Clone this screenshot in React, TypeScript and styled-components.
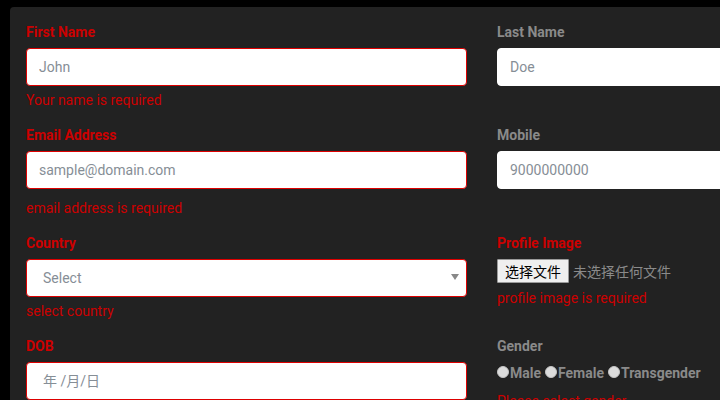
import React from "react";
import styled, { createGlobalStyle } from "styled-components";

const Global = createGlobalStyle`
  html, body {
    margin: 0;
    padding: 0;
    background: #000;
    overflow: hidden;
    width: 720px;
    height: 400px;
  }
  body {
    font-family: Roboto, "Noto Sans CJK SC", sans-serif;
  }
`;

const Page = styled.div`
  padding: 7px 0 0 10px;
`;

const Panel = styled.form`
  width: 944px;
  min-height: 420px;
  box-sizing: border-box;
  background: #222222;
  border-radius: 4px;
  padding: 15px 16px;
`;

const Row = styled.div`
  display: grid;
  grid-template-columns: 441px 441px;
  column-gap: 30px;
  margin-bottom: 15px;
`;

const Field = styled.div`
  display: flex;
  flex-direction: column;
  position: relative;
`;

const Label = styled.label<{ $invalid?: boolean }>`
  display: block;
  font-family: Roboto, sans-serif;
  font-weight: 700;
  font-size: 14px;
  line-height: 20px;
  margin-bottom: 6px;
  color: ${(p) => (p.$invalid ? "#cc0000" : "#8a8a8a")};
`;

const TextInput = styled.input<{ $invalid?: boolean; $pad?: number }>`
  box-sizing: border-box;
  width: 100%;
  height: 38px;
  margin: 0;
  border: 1px solid ${(p) => (p.$invalid ? "#dd0000" : "#ffffff")};
  border-radius: 4px;
  background: #ffffff;
  padding: 0 12px 0 ${(p) => p.$pad ?? 12}px;
  font-family: Roboto, "Noto Sans CJK SC", sans-serif;
  font-size: 14px;
  color: #495057;
  outline: none;
  &::placeholder {
    color: #868e96;
    opacity: 1;
  }
`;

const SelectWrap = styled.div`
  position: relative;
`;

const Select = styled.select<{ $invalid?: boolean }>`
  appearance: none;
  -webkit-appearance: none;
  box-sizing: border-box;
  width: 100%;
  height: 38px;
  margin: 0;
  border: 1px solid ${(p) => (p.$invalid ? "#dd0000" : "#ffffff")};
  border-radius: 4px;
  background: #ffffff;
  padding: 0 12px 0 16px;
  font-family: Roboto, sans-serif;
  font-size: 14px;
  color: #868e96;
  outline: none;
`;

const Arrow = styled.svg`
  position: absolute;
  right: 8px;
  top: 15px;
  pointer-events: none;
`;

const ErrorText = styled.div<{ $gap?: number }>`
  font-family: Roboto, sans-serif;
  font-size: 14px;
  line-height: 20px;
  color: #cc0000;
  margin-top: ${(p) => p.$gap ?? 4}px;
`;

const FileRow = styled.div`
  display: flex;
  align-items: center;
  height: 24px;
`;

const FileButton = styled.button`
  box-sizing: border-box;
  height: 24px;
  margin: 0 4px 0 0;
  padding: 0 7px;
  background: #efefef;
  border: 1px solid #9a9a9a;
  border-radius: 1px;
  font-family: "Noto Sans CJK SC", sans-serif;
  font-size: 14px;
  line-height: 22px;
  color: #000;
`;

const FileStatus = styled.span`
  font-family: "Noto Sans CJK SC", sans-serif;
  font-size: 14px;
  color: #8a8a8a;
`;

const RadioGroup = styled.div`
  display: flex;
  align-items: center;
  height: 20px;
  margin-top: 1px;
`;

const RadioLabel = styled.label`
  display: flex;
  align-items: flex-start;
  font-family: Roboto, sans-serif;
  font-weight: 700;
  font-size: 14px;
  line-height: 20px;
  color: #8a8a8a;
  margin-right: 4px;
`;

const Radio = styled.input`
  appearance: none;
  -webkit-appearance: none;
  box-sizing: border-box;
  width: 12px;
  height: 12px;
  margin: 3px 1px 0 0;
  border-radius: 50%;
  background: #dcdcdc;
  border: 1px solid #c4c4c4;
`;

export default function App() {
  return (
    <>
      <Global />
      <Page>
        <Panel onSubmit={(e) => e.preventDefault()}>
          <Row>
            <Field>
              <Label $invalid>First Name</Label>
              <TextInput $invalid placeholder="John" />
              <ErrorText>Your name is required</ErrorText>
            </Field>
            <Field>
              <Label>Last Name</Label>
              <TextInput placeholder="Doe" />
            </Field>
          </Row>
          <Row>
            <Field>
              <Label $invalid>Email Address</Label>
              <TextInput $invalid placeholder="sample@domain.com" />
              <ErrorText $gap={9}>email address is required</ErrorText>
            </Field>
            <Field>
              <Label>Mobile</Label>
              <TextInput placeholder="9000000000" />
            </Field>
          </Row>
          <Row>
            <Field>
              <Label $invalid>Country</Label>
              <SelectWrap>
                <Select $invalid defaultValue="">
                  <option value="">Select</option>
                </Select>
                <Arrow width="8" height="6" viewBox="0 0 8 6">
                  <path d="M0 0 L8 0 L4 6 Z" fill="#888888" />
                </Arrow>
              </SelectWrap>
              <ErrorText>select country</ErrorText>
            </Field>
            <Field>
              <Label $invalid>Profile Image</Label>
              <FileRow>
                <FileButton type="button">选择文件</FileButton>
                <FileStatus>未选择任何文件</FileStatus>
              </FileRow>
              <ErrorText $gap={5}>profile image is required</ErrorText>
            </Field>
          </Row>
          <Row>
            <Field>
              <Label $invalid>DOB</Label>
              <TextInput $invalid $pad={16} placeholder="年 /月/日" />
            </Field>
            <Field>
              <Label>Gender</Label>
              <RadioGroup>
                <RadioLabel>
                  <Radio type="radio" name="gender" />
                  Male
                </RadioLabel>
                <RadioLabel>
                  <Radio type="radio" name="gender" />
                  Female
                </RadioLabel>
                <RadioLabel>
                  <Radio type="radio" name="gender" />
                  Transgender
                </RadioLabel>
              </RadioGroup>
              <ErrorText $gap={8}>Please select gender</ErrorText>
            </Field>
          </Row>
        </Panel>
      </Page>
    </>
  );
}
